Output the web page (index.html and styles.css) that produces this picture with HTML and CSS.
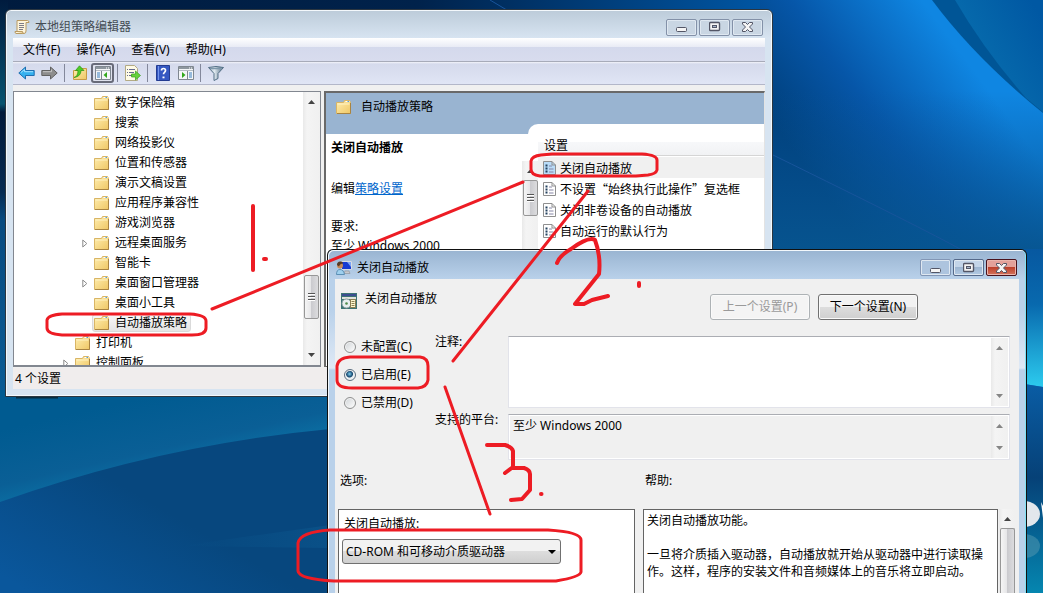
FILE: index.html
```html
<!DOCTYPE html>
<html lang="zh-CN">
<head>
    <meta charset="UTF-8">
    <meta name="viewport" content="width=device-width, initial-scale=1.0">
    <title>本地组策略编辑器</title>
    <link rel="stylesheet" href="styles.css">
</head>
<body>
    <!-- Shared icons -->
    <svg class="defs" aria-hidden="true">
        <defs>
            <linearGradient id="folderFill" x1="0" y1="0" x2="1" y2="1">
                <stop offset="0" stop-color="#ffeeb0"/>
                <stop offset="1" stop-color="#efc765"/>
            </linearGradient>
            <linearGradient id="funnelFill" x1="0" y1="0" x2="1" y2="0">
                <stop offset="0" stop-color="#a9bcc9"/>
                <stop offset=".4" stop-color="#dfe9ef"/>
                <stop offset="1" stop-color="#4d6980"/>
            </linearGradient>
            <symbol id="folder" viewBox="0 0 15 14">
                <path d="M.5 2.500h7l1-2h5l1 2v11H.5z" fill="url(#folderFill)" stroke="#d9b565"/>
                <path d="M9.500 1.500h4" stroke="#fff"/>
                <path d="M11.500 1.500h1.500" stroke="#4f9de0"/>
                <path d="M1.500 4h12" stroke="#fff3c4"/>
                <path d="M1 13.500h13.500V3" fill="none" stroke="#a98442"/>
            </symbol>
            <symbol id="setting" viewBox="0 0 13 14">
                <path class="sheet" d="M.5.5h8.500l3.500 3.500v9.500H.5z" stroke="#8f8f8f"/>
                <path class="fold" d="M9 .5v3.500h3.500" fill="none" stroke="#8f8f8f"/>
                <path d="M2.500 4.500h2M2.500 7.500h2M2.500 10.500h2" stroke="#24425f" stroke-width="2"/>
                <path d="M6 5h3M6 8h4.500M6 11h4.500" stroke="#8585a5"/>
            </symbol>
            <symbol id="up" viewBox="0 0 7 4"><path d="M0 4l3.500-4L7 4z"/></symbol>
            <symbol id="down" viewBox="0 0 7 4"><path d="M0 0l3.500 4L7 0z"/></symbol>
            <symbol id="expand" viewBox="0 0 6 9"><path d="M.8 1v7l4-3.500z" fill="#fff" stroke="#8b8b8b"/></symbol>
            <symbol id="min" viewBox="0 0 12 12"><rect x=".5" y="6.500" width="10" height="4" rx="1" fill="#f5f5f5" stroke="#535666"/></symbol>
            <symbol id="max" viewBox="0 0 12 12">
                <rect x=".5" y="1.500" width="10" height="8" rx="1" fill="#f5f5f5" stroke="#535666" stroke-width="1.400"/>
                <rect x="3.500" y="4.500" width="4" height="2" fill="#a5b4cb" stroke="#535666"/>
            </symbol>
            <symbol id="close" viewBox="0 0 12 12">
                <path d="M.5 1.500h3l2 2 2-2h3v1.500l-3 3 3 3v1.500h-3l-2-2-2 2h-3V9l3-3-3-3z" fill="#f5f5f5" stroke="#535666"/>
            </symbol>
            <symbol id="console" viewBox="0 0 16 14">
                <path d="M.5.5h15v13H.5z" fill="#f4f6f8" stroke="#7f8790"/>
                <path d="M1 2h14" stroke="#8e979f" stroke-width="2"/>
                <path d="M11 2h1M13 2h1" stroke="#fff"/>
                <path d="M1 4.500h14" stroke="#b5bcc4"/>
            </symbol>
        </defs>
    </svg>

    <div class="desktop">
        <svg class="wallpaper" viewBox="0 0 1043 593" preserveAspectRatio="none" aria-hidden="true">
            <defs>
                <linearGradient id="sky" x1="0" y1="0" x2="1" y2="0">
                    <stop offset="0" stop-color="#001b3e"/>
                    <stop offset=".4" stop-color="#00224b"/>
                    <stop offset=".72" stop-color="#0054a0"/>
                    <stop offset="1" stop-color="#0875cf"/>
                </linearGradient>
                <linearGradient id="beam" gradientUnits="userSpaceOnUse" x1="800" y1="160" x2="955" y2="45">
                    <stop offset="0" stop-color="#003f7a"/>
                    <stop offset=".45" stop-color="#0656a8"/>
                    <stop offset="1" stop-color="#0f86e2"/>
                </linearGradient>
                <linearGradient id="haze" x1="0" y1="0" x2="0" y2="1">
                    <stop offset=".35" stop-color="#08559a" stop-opacity="0"/>
                    <stop offset="1" stop-color="#07558f"/>
                </linearGradient>
                <linearGradient id="leaf" gradientUnits="userSpaceOnUse" x1="975" y1="60" x2="1043" y2="20">
                    <stop offset="0" stop-color="#076cad"/>
                    <stop offset="1" stop-color="#0058a3"/>
                </linearGradient>
                <linearGradient id="edge" x1="0" y1="0" x2="0" y2="1">
                    <stop offset="0" stop-color="#0758a0"/>
                    <stop offset=".4" stop-color="#0869ae"/>
                    <stop offset="1" stop-color="#2ccbee"/>
                </linearGradient>
                <linearGradient id="lower" x1="0" y1="0" x2="0" y2="1">
                    <stop offset="0" stop-color="#0a5da5"/>
                    <stop offset=".45" stop-color="#064177"/>
                    <stop offset="1" stop-color="#0586b0"/>
                </linearGradient>
                <linearGradient id="left" x1="0" y1="0" x2="0" y2="1">
                    <stop offset="0" stop-color="#001b3e"/>
                    <stop offset=".26" stop-color="#06536f"/>
                    <stop offset=".28" stop-color="#001a3b"/>
                    <stop offset=".48" stop-color="#062b52"/>
                    <stop offset=".55" stop-color="#084b80"/>
                    <stop offset="1" stop-color="#0a5c96"/>
                </linearGradient>
                <linearGradient id="sweep" gradientUnits="userSpaceOnUse" x1="150" y1="396" x2="167" y2="471">
                    <stop offset="0" stop-color="#005b91"/>
                    <stop offset=".7" stop-color="#0a5f96"/>
                    <stop offset="1" stop-color="#0b6fa3"/>
                </linearGradient>
                <linearGradient id="ground" gradientUnits="userSpaceOnUse" x1="130" y1="490" x2="60" y2="610">
                    <stop offset="0" stop-color="#07477e"/>
                    <stop offset="1" stop-color="#0a579c"/>
                </linearGradient>
                <linearGradient id="glow" gradientUnits="userSpaceOnUse" x1="180" y1="0" x2="330" y2="0">
                    <stop offset="0" stop-color="#0e5f96" stop-opacity="0"/>
                    <stop offset="1" stop-color="#0e5f96"/>
                </linearGradient>
            </defs>
            <path d="M0 0h1043v593H0z" fill="url(#sky)"/>
            <path d="M760 0h283v260H760z" fill="url(#beam)"/>
            <path d="M760 0h283v260H760z" fill="url(#haze)"/>
            <path d="M932 0Q975 58 1043 113V0z" fill="#005596"/>
            <path d="M955 0Q984 50 1026 98L1043 112V0z" fill="url(#leaf)"/>
            <path d="M490 0Q620 80 773 155T960 249" fill="none" stroke="#17549b"/>
            <path d="M1018 249h25v138l-25-4z" fill="url(#edge)"/>
            <path d="M1018 383l25 4v206h-25z" fill="url(#lower)"/>
            <ellipse cx="1024" cy="514" rx="16" ry="13" fill="#e2e7ec"/>
            <path d="M1041 502l2 4v12z" fill="#fff"/>
            <ellipse cx="1024" cy="546" rx="16" ry="12" fill="#4a93ad" opacity=".6"/>
            <path d="M0 0h8v400H0z" fill="url(#left)"/>
            <path d="M0 390h330v203H0z" fill="url(#sweep)"/>
            <path d="M0 502Q160 445 330 429v164H0z" fill="url(#ground)"/>
            <path d="M180 546L330 525v23z" fill="url(#glow)" opacity=".4"/>
            <path d="M16 397h42" stroke="#062c40" stroke-width="3"/>
        </svg>

        <!-- Policy editor -->
        <section class="window editor">
            <header class="titlebar">
                <svg class="app-icon" width="16" height="16" viewBox="0 0 16 16">
                    <path d="M3 1.500h10.500q1.500 0 1.500 2h-3v8.500q0 2.500-2 2.500H2q-1 0-1-2h2z" fill="#fdf5dc" stroke="#b89a62"/>
                    <path d="M5 4.500h5M5 6.500h5M5 8.500h5M5 10.500h4" stroke="#7d7d88"/>
                    <path d="M1 12.500h7.500q0 2 1.500 2" fill="#ecd59c" stroke="#b89a62"/>
                </svg>
                <h1 class="title">本地组策略编辑器</h1>
                <div class="captions">
                    <button class="caption" aria-label="最小化"><svg width="12" height="12"><use href="#min"/></svg></button>
                    <button class="caption" aria-label="最大化"><svg width="12" height="12"><use href="#max"/></svg></button>
                    <button class="caption" aria-label="关闭"><svg width="12" height="12"><use href="#close"/></svg></button>
                </div>
            </header>

            <nav class="menubar">
                <button>文件(F)</button>
                <button>操作(A)</button>
                <button>查看(V)</button>
                <button>帮助(H)</button>
            </nav>

            <div class="toolbar">
                <button aria-label="后退"><svg width="17" height="14" viewBox="0 0 17 14"><path d="M.8 7l6.700-6v3.500h8.700v5H7.500V13z" fill="#36b1ef" stroke="#1f6fb0"/><path d="M3 6.500l3.500-3v2.200H15" fill="none" stroke="#a5e2ff"/></svg></button>
                <button aria-label="前进"><svg width="17" height="14" viewBox="0 0 17 14"><path d="M16.200 7L9.500 1v3.500H.8v5h8.700V13z" fill="#8d8d8d" stroke="#626262"/><path d="M2 5.700h8.500V3.500" fill="none" stroke="#c5c5c5"/></svg></button>
                <span class="divider"></span>
                <button aria-label="向上一级"><svg width="16" height="16" viewBox="0 0 16 16"><path d="M1.500 5.500h6l1.500-2h5.500v11h-13z" fill="url(#folderFill)" stroke="#c79b46"/><path d="M2 12.500q4-1 4-7H3.500L7.500.8l4.500 4.700H9q0 6-7 7z" fill="#4ecb28" stroke="#2a9410" stroke-width=".7"/></svg></button>
                <button class="pressed" aria-label="显示/隐藏控制台树"><svg width="16" height="14" viewBox="0 0 16 14"><use href="#console" width="16" height="14"/><path d="M6.500 5v8" stroke="#7f8790"/><path d="M2 7h3M2 9h3M2 11h3" stroke="#397ec0"/><path d="M12 6v6L8.500 9z" fill="#32a81b"/></svg></button>
                <span class="divider"></span>
                <button aria-label="导出列表"><svg width="16" height="16" viewBox="0 0 16 16"><path d="M.5.5h9l3 3v12H.5z" fill="#fffbe6" stroke="#b3aa85"/><path d="M2 4.500h1M2 7.500h1M2 10.500h1M4 4.500h6M4 7.500h5M4 10.500h4" stroke="#666c90"/><path d="M6.500 9h4V6l5 4.500-5 4.500v-3h-4z" fill="#67d23b" stroke="#38a01c" stroke-width=".7"/></svg></button>
                <span class="divider"></span>
                <button aria-label="帮助"><svg width="14" height="16" viewBox="0 0 14 16"><path d="M.5.5h13v15H.5z" fill="#3558c2" stroke="#243c91"/><path d="M2.500 1v14" stroke="#7595ea"/><path d="M5.500 5.500q0-2 2-2t2 2q0 1-1 1.800t-1 2" fill="none" stroke="#fff" stroke-width="1.700"/><path d="M7.500 11.500v1.800" stroke="#fff" stroke-width="2"/></svg></button>
                <button aria-label="显示/隐藏操作窗格"><svg width="16" height="14" viewBox="0 0 16 14"><use href="#console" width="16" height="14"/><path d="M9.500 5v8" stroke="#7f8790"/><path d="M11 7h3M11 9h3M11 11h3" stroke="#397ec0"/><path d="M4 6v6L7.500 9z" fill="#32a81b"/></svg></button>
                <span class="divider"></span>
                <button aria-label="筛选器"><svg width="16" height="15" viewBox="0 0 16 15"><path d="M.5 1.500q7.500-2 15 0L10 7.500v5l-4 2v-7z" fill="url(#funnelFill)" stroke="#526e84"/><path d="M2 2.500h12" stroke="#7d97aa" stroke-width="1.500"/></svg></button>
            </div>

            <div class="panes">
                <div class="tree-pane">
                    <ul class="tree">
                        <li><svg class="folder"><use href="#folder"/></svg><span>数字保险箱</span></li>
                        <li><svg class="folder"><use href="#folder"/></svg><span>搜索</span></li>
                        <li><svg class="folder"><use href="#folder"/></svg><span>网络投影仪</span></li>
                        <li><svg class="folder"><use href="#folder"/></svg><span>位置和传感器</span></li>
                        <li><svg class="folder"><use href="#folder"/></svg><span>演示文稿设置</span></li>
                        <li><svg class="folder"><use href="#folder"/></svg><span>应用程序兼容性</span></li>
                        <li><svg class="folder"><use href="#folder"/></svg><span>游戏浏览器</span></li>
                        <li class="closed"><svg class="arrow"><use href="#expand"/></svg><svg class="folder"><use href="#folder"/></svg><span>远程桌面服务</span></li>
                        <li><svg class="folder"><use href="#folder"/></svg><span>智能卡</span></li>
                        <li class="closed"><svg class="arrow"><use href="#expand"/></svg><svg class="folder"><use href="#folder"/></svg><span>桌面窗口管理器</span></li>
                        <li><svg class="folder"><use href="#folder"/></svg><span>桌面小工具</span></li>
                        <li><div class="selected"><svg class="folder"><use href="#folder"/></svg><span>自动播放策略</span></div></li>
                        <li class="parent"><svg class="folder"><use href="#folder"/></svg><span>打印机</span></li>
                        <li class="parent closed"><svg class="arrow"><use href="#expand"/></svg><svg class="folder"><use href="#folder"/></svg><span>控制面板</span></li>
                    </ul>
                    <div class="scrollbar">
                        <svg class="scroll-arrow"><use href="#up"/></svg>
                        <div class="thumb tree-thumb"><i class="grip"></i></div>
                        <svg class="scroll-arrow"><use href="#down"/></svg>
                    </div>
                </div>

                <div class="detail-pane">
                    <div class="detail-head">
                        <div class="detail-title"><svg class="folder"><use href="#folder"/></svg><span>自动播放策略</span></div>
                        <div class="detail-tab"></div>
                    </div>
                    <div class="detail-body">
                        <div class="description">
                            <h2>关闭自动播放</h2>
                            <p>编辑<a href="#">策略设置</a></p>
                            <p class="require">要求:<br>至少 Windows 2000</p>
                        </div>
                        <div class="scrollbar detail-scroll">
                            <svg class="scroll-arrow"><use href="#up"/></svg>
                            <div class="thumb detail-thumb"><i class="grip"></i></div>
                        </div>
                        <div class="settings">
                            <div class="settings-head">设置</div>
                            <ul>
                                <li class="current"><svg class="setting"><use href="#setting"/></svg><span>关闭自动播放</span></li>
                                <li><svg class="setting"><use href="#setting"/></svg><span>不设置“始终执行此操作”复选框</span></li>
                                <li><svg class="setting"><use href="#setting"/></svg><span>关闭非卷设备的自动播放</span></li>
                                <li><svg class="setting"><use href="#setting"/></svg><span>自动运行的默认行为</span></li>
                            </ul>
                        </div>
                    </div>
                </div>
            </div>
            <footer class="statusbar">4 个设置</footer>
        </section>

        <!-- Policy dialog -->
        <section class="window dialog">
            <header class="titlebar">
                <svg class="app-icon" width="16" height="16" viewBox="0 0 16 16">
                    <path d="M5.500 1.500h10v8h-10z" fill="#173bd2" stroke="#d8dce2"/>
                    <path d="M11 2h4v5z" fill="#7ea5f5"/>
                    <path d="M9 11h4l1 2.500H8z" fill="#c6c9cf" stroke="#8b8f96" stroke-width=".6"/>
                    <circle cx="4" cy="5.500" r="3" fill="#c98b57"/>
                    <path d="M1 5q0-4 4-3.500 2 0 2 2-3 0-4 3z" fill="#563a25"/>
                    <path d="M.5 14.500q0-5 3.500-5t4.500 5z" fill="#9fd0ee" stroke="#5b8fb5"/>
                </svg>
                <h1 class="title">关闭自动播放</h1>
                <div class="captions">
                    <button class="caption inactive" aria-label="最小化"><svg width="12" height="12"><use href="#min"/></svg></button>
                    <button class="caption" aria-label="最大化"><svg width="12" height="12"><use href="#max"/></svg></button>
                    <button class="caption danger" aria-label="关闭"><svg width="12" height="12"><use href="#close"/></svg></button>
                </div>
            </header>

            <form class="dialog-body">
                <div class="policy-head">
                    <svg width="16" height="16" viewBox="0 0 16 16">
                        <path d="M0 0h16v16H0z" fill="#3d7374"/>
                        <path d="M1 1h14v2H1z" fill="#3c4e91"/>
                        <path d="M1 4h14v2H1z" fill="#e3e3dc"/>
                        <circle cx="5.500" cy="10.500" r="4.500" fill="#e8eef0" stroke="#8b9c9f"/>
                        <circle cx="5.500" cy="10.500" r="1.300" fill="#4e8a4a"/>
                        <path d="M9.500 6.500h5v8h-5z" fill="#fff7cf" stroke="#8a7c50"/>
                        <path d="M10.500 8.500h3M10.500 10.500h3M10.500 12.500h3" stroke="#8c8152"/>
                    </svg>
                    <span class="policy-name">关闭自动播放</span>
                    <button type="button" class="push" disabled>上一个设置(P)</button>
                    <button type="button" class="push">下一个设置(N)</button>
                </div>

                <div class="state">
                    <div class="radios">
                        <label><input type="radio" name="state">未配置(C)</label>
                        <label><input type="radio" name="state" checked>已启用(E)</label>
                        <label><input type="radio" name="state">已禁用(D)</label>
                    </div>
                    <label class="field-label" for="comment">注释:</label>
                    <div class="field comment">
                        <textarea id="comment"></textarea>
                        <div class="scrollbar faded">
                            <svg class="scroll-arrow"><use href="#up"/></svg>
                            <svg class="scroll-arrow"><use href="#down"/></svg>
                        </div>
                    </div>
                    <label class="field-label" for="platform">支持的平台:</label>
                    <div class="field platform">
                        <textarea id="platform" readonly>至少 Windows 2000</textarea>
                        <div class="scrollbar faded">
                            <svg class="scroll-arrow"><use href="#up"/></svg>
                            <svg class="scroll-arrow"><use href="#down"/></svg>
                        </div>
                    </div>
                </div>

                <div class="lower">
                    <div class="options">
                        <h2>选项:</h2>
                        <div class="box">
                            <label for="drives">关闭自动播放:</label>
                            <div class="combo">
                                <select id="drives"><option>CD-ROM 和可移动介质驱动器</option></select>
                                <svg class="combo-arrow" viewBox="0 0 8 4"><path d="M0 0h8L4 4z"/></svg>
                            </div>
                        </div>
                    </div>
                    <div class="help">
                        <h2>帮助:</h2>
                        <div class="help-row">
                            <div class="box help-text">
                                <p>关闭自动播放功能。</p>
                                <p>一旦将介质插入驱动器，自动播放就开始从驱动器中进行读取操作。这样，程序的安装文件和音频媒体上的音乐将立即启动。</p>
                            </div>
                            <div class="scrollbar">
                                <svg class="scroll-arrow"><use href="#up"/></svg>
                                <div class="thumb help-thumb"></div>
                            </div>
                        </div>
                    </div>
                </div>
            </form>
        </section>

        <!-- Red pen marks -->
        <svg class="marks" width="1043" height="593" viewBox="0 0 1043 593" aria-hidden="true">
            <path d="M62 314H190Q206 315 206 321V328Q206 335 192 335H62Q47 334 47 328V320Q48 315 62 314z"/>
            <path d="M541 155L552 154H642Q657 155 657 160V170Q656 174 648 175L636 176H540Q531 175 531 169V161Q532 156 541 155z"/>
            <path d="M350 357H420Q428 358 428 366V380Q427 387 418 388H352Q337 388 337 380V366Q338 358 350 357z"/>
            <path d="M330 530H548Q581 532 581 540V572Q580 577 556 581H334Q299 579 298 571V543Q300 532 330 530z"/>
            <path class="bold" d="M253 206V270"/>
            <path class="bold" d="M264 259h2"/>
            <path d="M212 309L523 182"/>
            <path d="M588 191L453 361"/>
            <path d="M445 387L490 514"/>
            <path class="bold" d="M557 263Q560 255 571 249Q589 236 595 240Q601 256 599 274L575 304L584 304L592 300L608 296"/>
            <path class="bold" d="M639 283v3"/>
            <path class="bold" d="M487 445H505Q512 447 513 451V467L505 473M513 468H524Q530 470 530 474V490L522 499L511 500"/>
            <path class="bold" d="M541 494h.5"/>
        </svg>
    </div>
</body>
</html>
```
FILE: styles.css
```css
* {
    box-sizing: border-box;
}

body {
    margin: 0;
    font: 12px/16px "Noto Sans", "Noto Sans CJK SC", sans-serif;
    color: #000;
}

h1, h2, p, ul {
    margin: 0;
    padding: 0;
    font-size: 12px;
    font-weight: normal;
    list-style: none;
}

button, select, textarea {
    font: inherit;
    color: inherit;
}

svg {
    flex: none;
    display: block;
}

.defs {
    position: absolute;
    width: 0;
    height: 0;
}

.desktop {
    position: relative;
    height: 100vh;
    overflow: hidden;
    background: #07477e;
}

.wallpaper {
    position: absolute;
    width: 100%;
    height: 100%;
}

/* Windows */
.window {
    position: absolute;
    display: flex;
    flex-direction: column;
    border: 1px solid #2b3640;
    border-radius: 6px 6px 0 0;
    box-shadow: inset 0 0 0 1px #f3f8fc;
    padding: 0 7px 7px;
}

.editor {
    left: 5px;
    right: 270px;
    top: 9px;
    height: 388px;
    background: linear-gradient(#bccbd9, #d7e4f1 28px);
}

.titlebar {
    display: flex;
    align-items: center;
    flex: none;
    height: 28px;
    padding: 6px 2px 0 1px;
}

.title {
    flex: 1;
    margin-left: 5px;
}

.editor .title {
    color: #444c54;
}

.captions {
    display: flex;
    gap: 2px;
    align-items: center;
}

.caption {
    display: flex;
    align-items: center;
    justify-content: center;
    width: 31px;
    height: 17px;
    padding: 0;
    border: 1px solid #8391a8;
    border-radius: 2px;
    background: #c9d6e3;
    box-shadow: inset 0 0 0 1px #dfe8f1;
}

/* Menu and toolbar */
.menubar {
    display: flex;
    flex: none;
    height: 24px;
    padding: 0 2px;
    border-bottom: 1px solid #a7abb9;
    background: linear-gradient(#fff, #e8ebf5 9px, #d4d9ec 9px, #d8dcee);
}

.menubar button {
    padding: 0 8px;
    border: 0;
    background: none;
}

.toolbar {
    display: flex;
    align-items: center;
    flex: none;
    height: 23px;
    padding: 0 2px;
    border-bottom: 1px solid #b3b7c9;
    background: linear-gradient(#f3f4fa, #d5daec 2px, #e0e5f5);
}

.toolbar button {
    display: flex;
    align-items: center;
    justify-content: center;
    width: 23px;
    height: 20px;
    padding: 0;
    border: 1px solid transparent;
    border-radius: 3px;
    background: none;
}

.toolbar .pressed {
    border: 2px solid #686b79;
    background: #dfe2ee;
}

.divider {
    width: 1px;
    height: 18px;
    margin: 0 3px;
    background: #83889b;
}

/* Editor panes */
.panes {
    display: flex;
    flex: 1;
    min-height: 0;
    gap: 3px;
    padding: 6px 0 1px;
    background: #f0f0f0;
}

.tree-pane {
    display: flex;
    width: 308px;
    border: 1px solid #828790;
    border-bottom-width: 2px;
    background: #fff;
}

.tree {
    flex: 1;
    padding-top: 1px;
    overflow: hidden;
}

.tree li {
    display: flex;
    align-items: center;
    height: 20px;
    padding-left: 80px;
    white-space: nowrap;
}

.tree li.parent {
    padding-left: 61px;
}

.tree li.closed {
    padding-left: 68px;
}

.tree li.parent.closed {
    padding-left: 49px;
}

.tree span {
    margin-left: 6px;
}

.folder {
    width: 15px;
    height: 14px;
}

.arrow {
    width: 6px;
    height: 9px;
    margin-right: 6px;
}

.selected {
    display: flex;
    align-items: center;
    height: 18px;
    margin-left: -2px;
    padding: 0 3px 0 1px;
    border: 1px solid #dadada;
    border-radius: 3px;
    background: linear-gradient(#f8f8f8, #e5e5e5);
}

.scrollbar {
    display: flex;
    flex-direction: column;
    align-items: center;
    justify-content: space-between;
    flex: none;
    width: 17px;
    padding: 8px 0;
    background: linear-gradient(90deg, #e9e9e9, #f4f4f4 4px, #f0f0f0);
}

.scroll-arrow {
    width: 7px;
    height: 4px;
    fill: #444;
}

.faded .scroll-arrow {
    fill: #858585;
}

.thumb {
    display: flex;
    align-items: center;
    justify-content: center;
    width: 15px;
    border: 1px solid #979797;
    border-radius: 2px;
    background: linear-gradient(90deg, #f5f5f5, #e6e6e8 45%, #cbcbcf 50%, #dcdcde);
}

.grip {
    width: 7px;
    height: 8px;
    background: repeating-linear-gradient(#555 0 1px, #fff 1px 2px, transparent 2px 3px);
}

.tree-thumb {
    height: 44px;
    margin: auto 0 34px;
}

.detail-pane {
    display: flex;
    flex-direction: column;
    flex: 1;
    min-width: 0;
    border: 2px solid #696969;
    border-width: 2px 1px 1px 2px;
    border-right-color: #e3e3e3;
    background: #fff;
}

.detail-head {
    flex: none;
    background: #99b4d1;
}

.detail-title {
    display: flex;
    align-items: center;
    gap: 10px;
    height: 31px;
    padding: 0 10px 4px;
}

.detail-tab {
    height: 10px;
    margin-left: 202px;
    border-radius: 10px 0 0;
    background: #fff;
}

.detail-body {
    display: flex;
    flex: 1;
    min-height: 0;
}

.description {
    width: 196px;
    padding: 6px 5px;
    overflow: hidden;
}

.description h2 {
    font-weight: bold;
}

.description p {
    margin-top: 25px;
}

.description .require {
    margin-top: 20px;
    line-height: 19px;
}

.description a {
    color: #0066cc;
}

.detail-scroll {
    justify-content: flex-start;
    width: 16px;
    margin-top: 27px;
}

.detail-thumb {
    height: 36px;
    margin-top: 7px;
}

.settings {
    flex: 1;
    min-width: 0;
    padding-top: 1px;
    font-family: "Noto Sans CJK SC", sans-serif;
}

.settings-head {
    height: 21px;
    padding: 2px 6px;
    border-bottom: 1px solid #d5d5d5;
    background: linear-gradient(#fff 7px, #f7f8fa 7px, #f1f2f4);
}

.settings li {
    display: flex;
    align-items: center;
    gap: 4px;
    height: 21px;
    padding-left: 5px;
    white-space: nowrap;
}

.settings ul {
    padding-top: 1px;
}

.settings .current {
    background: #f0f0f0;
}

.setting {
    width: 13px;
    height: 14px;
    fill: #fff;
}

.current .setting {
    fill: #b9dcf8;
}

.statusbar {
    flex: none;
    height: 21px;
    padding: 3px 2px;
    background: #f0eded;
}

/* Dialog */
.dialog {
    left: 327px;
    right: 16px;
    top: 249px;
    bottom: 0;
    padding-bottom: 0;
    border-color: #111;
    border-bottom: 0;
    background: linear-gradient(#99b4d1, #b9d1ea 29px, #b9d1ea 60px, #dfe9f5 118px, #b9d1ea 120px);
    box-shadow: inset 1px 1px #f3f8fc, inset -1px 0 #7fe2f5;
}

.dialog .titlebar {
    height: 29px;
}

.dialog .caption {
    border-color: #55698a;
    background: linear-gradient(#c3d4e8 50%, #9db5d1 50%, #b3cbe4);
}

.dialog .inactive {
    border-color: #8296b5;
    background: #adc4de;
}

.dialog .danger {
    border-color: #49121c;
    background: linear-gradient(#e3a19a 50%, #bd412c 50%, #d4745e);
    box-shadow: inset 0 0 0 1px #eab5ad;
}

.dialog-body {
    display: flex;
    flex-direction: column;
    flex: 1;
    min-height: 0;
    padding: 15px 4px 0 3px;
    background: #f0f0f0;
}

.policy-head {
    display: flex;
    flex: none;
    gap: 8px;
    height: 42px;
    padding: 0 97px 0 3px;
}

.policy-head svg {
    margin-top: -1px;
}

.policy-name {
    flex: 1;
    margin-top: -3px;
}

.push {
    width: 100px;
    height: 26px;
    padding: 0;
    border: 1px solid #707070;
    border-radius: 3px;
    background: linear-gradient(#f2f2f2 50%, #dddddd 50%, #cfcfcf);
    box-shadow: inset 0 0 0 1px #fafafa;
}

.push:disabled {
    border-color: #adb2b5;
    background: #f4f4f4;
    color: #9a9a9a;
}

.state {
    display: grid;
    grid-template-columns: 97px 73px 1fr;
    grid-template-rows: 72px 46px;
    row-gap: 6px;
    flex: none;
    padding-right: 5px;
}

.radios {
    grid-row: 1 / 3;
    padding-top: 3px;
}

.radios label {
    display: flex;
    align-items: center;
    gap: 5px;
    height: 16px;
    margin-bottom: 12px;
    padding-left: 6px;
}

.radios input {
    appearance: none;
    width: 12px;
    height: 12px;
    margin: 0;
    border: 1px solid #8e8f8f;
    border-radius: 50%;
    background: linear-gradient(135deg, #cfd3d6, #fff);
    box-shadow: inset 0 0 0 1px #f4f4f4;
}

.radios input:checked {
    border-color: #5b6f80;
    background: radial-gradient(circle at 45% 40%, #7fd0f0, #14466e 3px, #e8eef2 4px);
}

.field-label {
    margin-top: -2px;
}

.field {
    display: flex;
    border: 1px solid #e2e3ea;
    border-top-color: #abadb3;
    background: #fff;
    box-shadow: inset 0 0 0 1px #fff;
}

.platform {
    background: #f0f0f0;
}

.field textarea {
    flex: 1;
    min-width: 0;
    padding: 3px 4px;
    border: 0;
    outline: 0;
    background: none;
    resize: none;
}

.field .scrollbar {
    margin: 1px;
}

.lower {
    display: flex;
    flex: 1;
    min-height: 0;
    gap: 8px;
    padding-top: 13px;
}

.lower h2 {
    flex: none;
    height: 36px;
    padding-left: 2px;
}

.options {
    display: flex;
    flex-direction: column;
    width: 297px;
}

.box {
    flex: 1;
    padding: 6px 3px 0;
    border: 1px solid #646464;
    border-bottom: 0;
    background: #fff;
}

.box label {
    display: block;
    margin-bottom: 7px;
    padding-left: 2px;
}

.combo {
    position: relative;
    width: 219px;
}

.combo select {
    appearance: none;
    display: block;
    width: 100%;
    height: 25px;
    padding: 0 3px;
    border: 1px solid #707070;
    border-radius: 3px;
    background: linear-gradient(#f2f2f2 50%, #dddddd 50%, #cfcfcf);
}

.combo-arrow {
    position: absolute;
    right: 5px;
    top: 11px;
    width: 8px;
    height: 4px;
    pointer-events: none;
}

.help {
    display: flex;
    flex-direction: column;
    flex: 1;
}

.help-row {
    display: flex;
    flex: 1;
    gap: 1px;
}

.help-text {
    padding-top: 2px;
}

.help-text p {
    margin-bottom: 17px;
    line-height: 17px;
}

.help .scrollbar {
    width: 16px;
    padding-bottom: 0;
}

.help-thumb {
    flex: 1;
    margin-top: 7px;
    border-bottom: 0;
}

/* Pen marks over both windows */
.marks {
    position: absolute;
    left: 0;
    top: 0;
    fill: none;
    stroke: #ed1c24;
    stroke-width: 3px;
    stroke-linecap: round;
    stroke-linejoin: round;
    pointer-events: none;
}

.marks .bold {
    stroke-width: 4px;
}
```
